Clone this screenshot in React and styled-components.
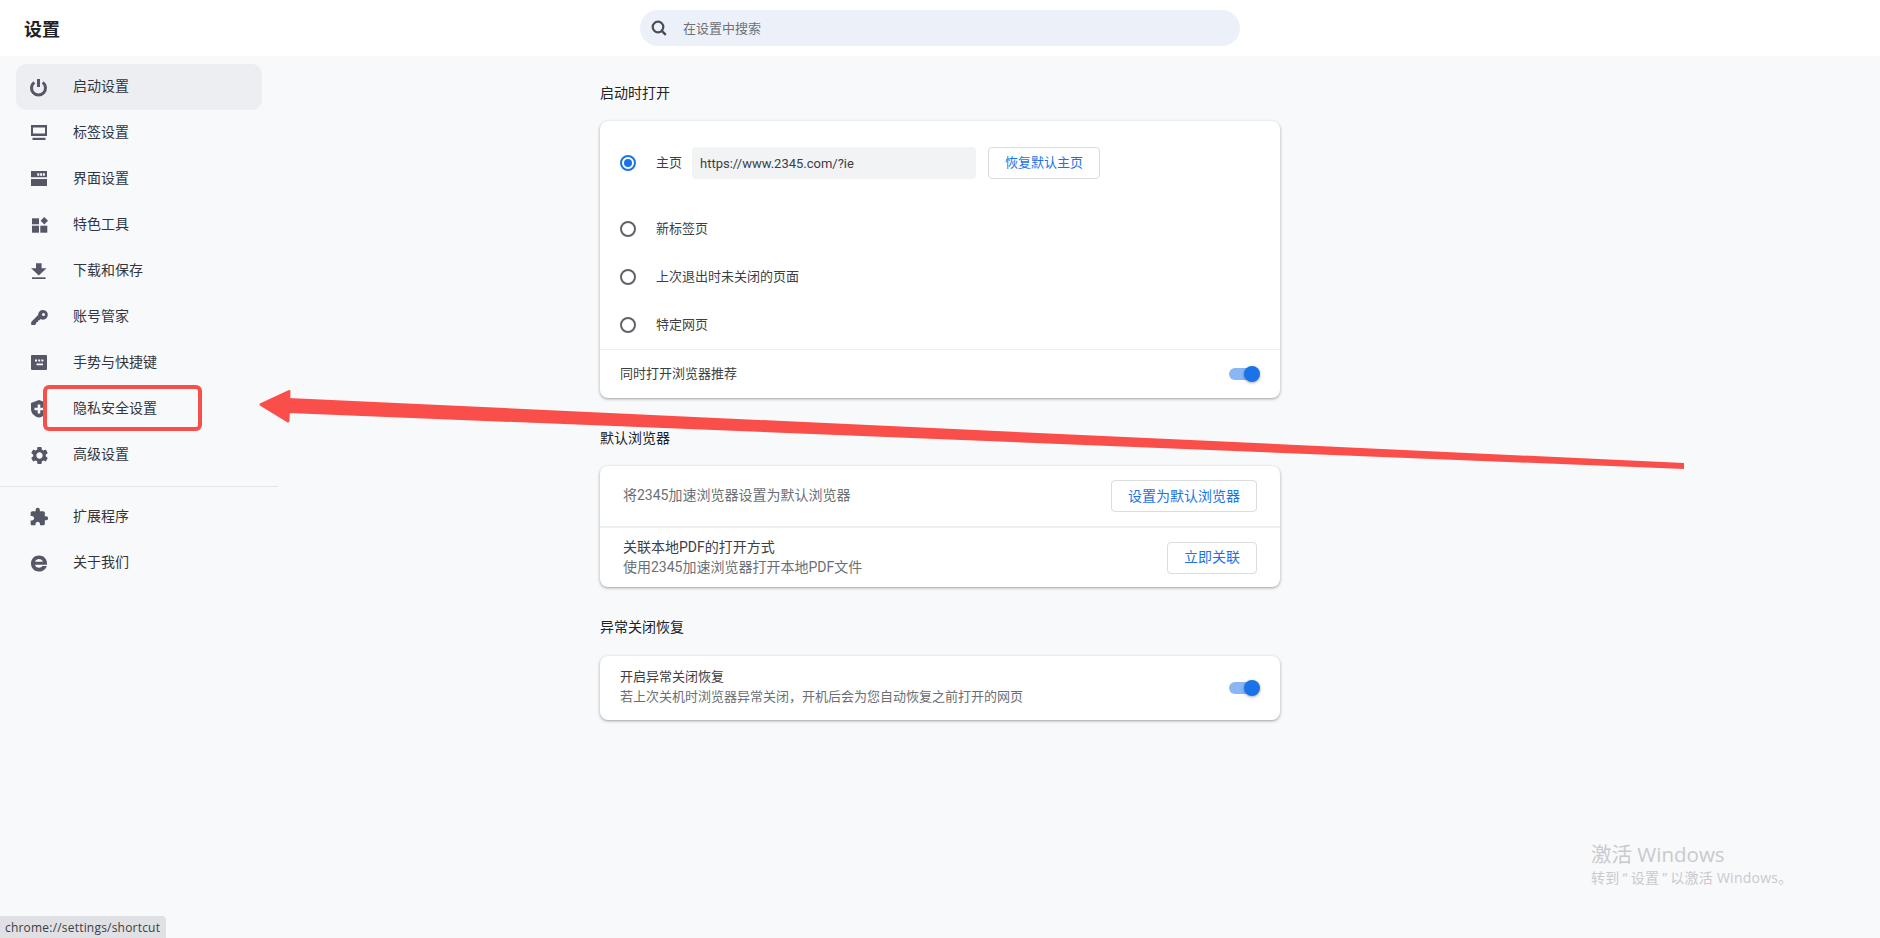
import React from 'react';
import styled, { createGlobalStyle } from 'styled-components';
import { MdSettings, MdExtension } from 'react-icons/md';

const Global = createGlobalStyle`
  html, body { margin: 0; padding: 0; height: 100%; }
  body { background: #f8f9fb; font-family: Roboto, "Noto Sans CJK SC", sans-serif; color: #202124; overflow: hidden; }
  * { box-sizing: border-box; }
`;

const Page = styled.div`
  position: relative;
  width: 1880px;
  height: 938px;
  overflow: hidden;
`;
const Header = styled.header`
  height: 56px;
  background: #fff;
  display: flex;
  align-items: center;
  padding-left: 24px;
`;
const Title = styled.h1`
  margin: 0;
  width: 616px;
  font-size: 18px;
  font-weight: 700;
  color: #202124;
`;
const Search = styled.div`
  width: 600px;
  height: 36px;
  border-radius: 18px;
  background: #ecf0f9;
  display: flex;
  align-items: center;
  padding-left: 8px;
  gap: 13px;
  color: #6f7276;
  font-size: 13px;
`;
const SearchText = styled.span`
  padding-bottom: 1px;
`;
const Body = styled.div`
  display: flex;
`;
const Sidebar = styled.nav`
  width: 278px;
  padding-top: 8px;
  flex: none;
`;
const NavGroup = styled.div`
  padding-left: 16px;
`;
const NavRow = styled.div`
  width: 246px;
  height: 46px;
  display: flex;
  align-items: center;
  padding-left: 11px;
  gap: 22px;
  border-radius: 10px;
  font-size: 14px;
  color: #33353d;
  background: ${p => (p.$active ? '#edeef2' : 'transparent')};
`;
const NavLabel = styled.span`
  padding-bottom: 4px;
`;
const IconBox = styled.span`
  width: 24px;
  height: 24px;
  display: flex;
  align-items: center;
  justify-content: center;
  color: #555766;
`;
const NavDivider = styled.div`
  height: 1px;
  background: #e4e5e9;
  margin: 8px 0 7px;
`;
const Main = styled.main`
  margin-left: 322px;
  width: 680px;
`;
const SectionTitle = styled.h2`
  margin: 0;
  font-size: 14px;
  font-weight: 400;
  color: #202124;
  height: ${p => p.$h}px;
  padding-top: ${p => p.$top}px;
  line-height: 20px;
`;
const Card = styled.section`
  background: #fff;
  border-radius: 8px;
  box-shadow: 0 1px 2px rgba(60, 64, 67, .3), 0 1px 3px 1px rgba(60, 64, 67, .15);
`;
const TextLine = styled.span`
  padding-bottom: 3px;
`;
const RadioRow = styled.div`
  height: ${p => p.$h}px;
  display: flex;
  align-items: center;
  padding-left: 20px;
  font-size: 13px;
  color: #3c4043;
`;
const Radio = styled.span`
  width: 16px;
  height: 16px;
  border-radius: 50%;
  border: 2px solid ${p => (p.$on ? '#1a73e8' : '#5f6368')};
  display: flex;
  align-items: center;
  justify-content: center;
  margin-right: 20px;
  flex: none;
  &::after {
    content: '';
    width: 8px;
    height: 8px;
    border-radius: 50%;
    background: ${p => (p.$on ? '#1a73e8' : 'transparent')};
  }
`;
const UrlField = styled.div`
  width: 284px;
  height: 32px;
  margin-left: 10px;
  padding-left: 8px;
  border-radius: 4px;
  background: #f1f3f4;
  display: flex;
  align-items: center;
  color: #3c4043;
  font-size: 13px;
`;
const OutlineBtn = styled.button`
  height: 32px;
  width: ${p => p.$w}px;
  margin-left: ${p => p.$ml || 0}px;
  background: #fff;
  border: 1px solid #dadce0;
  border-radius: 4px;
  color: #1a73e8;
  font: inherit;
  font-size: ${p => p.$fs || 14}px;
  padding: 0 0 3px;
  flex: none;
`;
const Divider = styled.div`
  height: ${p => p.$t || 1}px;
  background: #eceef0;
`;
const SwitchRow = styled.div`
  height: ${p => p.$h}px;
  display: flex;
  align-items: center;
  justify-content: space-between;
  padding: 0 20px;
  font-size: 13px;
  color: #3c4043;
`;
const Track = styled.span`
  position: relative;
  display: block;
  width: 29px;
  height: 12px;
  margin-right: 2px;
  border-radius: 6px;
  background: #8ab6f4;
  flex: none;
  &::after {
    content: '';
    position: absolute;
    right: -2px;
    top: -2px;
    width: 16px;
    height: 16px;
    border-radius: 50%;
    background: #1a73e8;
    box-shadow: 0 1px 3px rgba(0, 0, 0, .35);
  }
`;
const ActionRow = styled.div`
  height: ${p => p.$h}px;
  display: flex;
  align-items: center;
  justify-content: space-between;
  padding: 0 23px;
  font-size: 14px;
`;
const ActionText = styled.span`
  padding-bottom: 5px;
  color: #6b6f75;
`;
const Stack = styled.div`
  display: flex;
  flex-direction: column;
  line-height: 20px;
  padding-bottom: 2px;
  color: #3c4043;
`;
const Sub = styled.span`
  color: #6b6f75;
`;
const RedBox = styled.div`
  position: absolute;
  left: 43px;
  top: 385px;
  width: 159px;
  height: 46px;
  border: 4px solid #fa4e4b;
  border-radius: 6px;
`;
const ArrowSvg = styled.svg`
  position: absolute;
  left: 0;
  top: 0;
  pointer-events: none;
`;
const Watermark = styled.div`
  position: absolute;
  left: 1591px;
  top: 841px;
  color: #c9cacc;
  font-family: "Open Sans", "Noto Sans CJK SC", sans-serif;
`;
const WmTitle = styled.div`
  font-size: 20.5px;
  line-height: 27px;
`;
const WmSub = styled.div`
  font-size: 14px;
  line-height: 20px;
  letter-spacing: .25px;
`;
const WmQuote = styled.span`
  padding: 0 3px;
`;
const StatusBubble = styled.div`
  position: absolute;
  left: 0;
  bottom: 0;
  height: 22px;
  width: 166px;
  padding-left: 5px;
  display: flex;
  align-items: center;
  background: #dfe1e5;
  border-top-right-radius: 4px;
  font-size: 12px;
  letter-spacing: .2px;
  color: #3c4043;
  font-family: "Open Sans", sans-serif;
  white-space: nowrap;
`;

const Ico = ({ children }) => (
  <svg width="24" height="24" viewBox="0 0 24 24" fill="currentColor">{children}</svg>
);
const PowerIcon = () => (
  <Ico>
    <path d="M7.300 7.400A7 7 0 1 0 15.700 7.400" fill="none" stroke="currentColor" strokeWidth="3" />
    <rect x="10" y="4" width="3" height="8" />
  </Ico>
);
const MonitorIcon = () => (
  <Ico>
    <path fillRule="evenodd" d="M4 4h16v11H4zm2 2.500v6h12v-6z" />
    <rect x="5.500" y="16.800" width="13" height="2.200" />
  </Ico>
);
const WindowIcon = () => (
  <Ico>
    <path fillRule="evenodd" d="M4 4h16v6.300H4zm6.300 2.300v2.400h2V6.300zm2.800 0v2.400h2V6.300zm2.800 0v2.400h2V6.300z" />
    <rect x="4" y="12" width="16" height="7" />
  </Ico>
);
const WidgetIcon = () => (
  <Ico>
    <rect x="5" y="5.300" width="7" height="6" />
    <rect x="5" y="12.700" width="7" height="7" />
    <rect x="13.300" y="12.700" width="7" height="7" />
    <path d="M17.300 4l3.700 3.700-3.700 3.700-3.700-3.700z" />
  </Ico>
);
const DownloadIcon = () => (
  <Ico>
    <path d="M9 4.300h5.600v5h4.900l-7.700 7.200-7.700-7.200H9z" />
    <rect x="5" y="18.300" width="13.600" height="1.700" />
  </Ico>
);
const KeyIcon = () => (
  <Ico>
    <path fillRule="evenodd" d="M16 5a4.800 4.800 0 1 1-2.300 9l-1.300 1.300-1.300.1-.1 1.500-1.600.2-.2 1.500-1.200 1.400H4.200v-3l6.900-6.900A4.800 4.800 0 0 1 16 5zm.5 3a1.500 1.500 0 1 0 0 3 1.500 1.500 0 0 0 0-3z" />
  </Ico>
);
const KeyboardIcon = () => (
  <Ico>
    <path fillRule="evenodd" d="M5 4h14a1 1 0 0 1 1 1v13a1 1 0 0 1-1 1H5a1 1 0 0 1-1-1V5a1 1 0 0 1 1-1zm3 4.500v2h2v-2zm3.200 0v2h2v-2zm3.200 0v2h2v-2zM9.500 12.500v1.800h6.500v-1.800z" />
  </Ico>
);
const ShieldIcon = () => (
  <Ico>
    <path fillRule="evenodd" d="M12 3l8 3v6c0 4.500-3.400 7.600-8 8.600-4.600-1-8-4.100-8-8.600V6zm-1.300 4.500v3.200H7.500v2.600h3.200v3.200h2.600v-3.200h3.200v-2.600h-3.200V7.500z" />
  </Ico>
);
const IeIcon = () => (
  <Ico>
    <path fillRule="evenodd" d="M12 4.500c4.600 0 8 3.400 8 8v1.200H8c.4 1.900 2 3 4 3 1.500 0 2.700-.6 3.400-1.700h4.400c-1 3.500-4 5.500-7.800 5.500-4.600 0-8-3.500-8-8s3.400-8 8-8zM12 8c-1.900 0-3.400 1-3.900 2.800h7.800C15.400 9 13.900 8 12 8z" />
  </Ico>
);
const SearchIcon = () => (
  <svg width="22" height="22" viewBox="0 0 22 22" fill="none" stroke="#4a4d52">
    <circle cx="10" cy="10" r="5.300" strokeWidth="2.200" />
    <path d="M13.800 13.800l4 4" strokeWidth="2.400" />
  </svg>
);

const navTop = [
  ['启动设置', <PowerIcon />, true],
  ['标签设置', <MonitorIcon />],
  ['界面设置', <WindowIcon />],
  ['特色工具', <WidgetIcon />],
  ['下载和保存', <DownloadIcon />],
  ['账号管家', <KeyIcon />],
  ['手势与快捷键', <KeyboardIcon />],
  ['隐私安全设置', <ShieldIcon />],
  ['高级设置', <MdSettings size={21} />],
];
const navBottom = [
  ['扩展程序', <MdExtension size={20} />],
  ['关于我们', <IeIcon />],
];

const Nav = ({ items }) => (
  <NavGroup>
    {items.map(([label, icon, active]) => (
      <NavRow key={label} $active={active}>
        <IconBox>{icon}</IconBox>
        <NavLabel>{label}</NavLabel>
      </NavRow>
    ))}
  </NavGroup>
);

export default function App() {
  return (
    <Page>
      <Global />
      <Header>
        <Title>设置</Title>
        <Search>
          <SearchIcon />
          <SearchText>在设置中搜索</SearchText>
        </Search>
      </Header>
      <Body>
        <Sidebar>
          <Nav items={navTop} />
          <NavDivider />
          <Nav items={navBottom} />
        </Sidebar>
        <Main>
          <SectionTitle $h={65} $top={27}>启动时打开</SectionTitle>
          <Card>
            <RadioRow $h={84}>
              <Radio $on />
              <TextLine>主页</TextLine>
              <UrlField>https://www.2345.com/?ie</UrlField>
              <OutlineBtn $w={112} $ml={12} $fs={13}>恢复默认主页</OutlineBtn>
            </RadioRow>
            <RadioRow $h={48}><Radio /><TextLine>新标签页</TextLine></RadioRow>
            <RadioRow $h={48}><Radio /><TextLine>上次退出时未关闭的页面</TextLine></RadioRow>
            <RadioRow $h={48}><Radio /><TextLine>特定网页</TextLine></RadioRow>
            <Divider />
            <SwitchRow $h={48}><TextLine>同时打开浏览器推荐</TextLine><Track /></SwitchRow>
          </Card>
          <SectionTitle $h={68} $top={30}>默认浏览器</SectionTitle>
          <Card>
            <ActionRow $h={60}>
              <ActionText>将2345加速浏览器设置为默认浏览器</ActionText>
              <OutlineBtn $w={146}>设置为默认浏览器</OutlineBtn>
            </ActionRow>
            <Divider $t={2} />
            <ActionRow $h={59}>
              <Stack>
                关联本地PDF的打开方式
                <Sub>使用2345加速浏览器打开本地PDF文件</Sub>
              </Stack>
              <OutlineBtn $w={90}>立即关联</OutlineBtn>
            </ActionRow>
          </Card>
          <SectionTitle $h={69} $top={30}>异常关闭恢复</SectionTitle>
          <Card>
            <SwitchRow $h={64}>
              <Stack>
                开启异常关闭恢复
                <Sub>若上次关机时浏览器异常关闭，开机后会为您自动恢复之前打开的网页</Sub>
              </Stack>
              <Track />
            </SwitchRow>
          </Card>
        </Main>
      </Body>
      <RedBox />
      <ArrowSvg width="1880" height="938" viewBox="0 0 1880 938">
        <path d="M288 398 L1684 463 L1684 469 L288 413 Z" fill="#fa4e4b" />
        <path
          d="M261 404.500 L289 391.500 L288 421 Z"
          fill="#fa4e4b"
          stroke="#fa4e4b"
          strokeWidth="3"
          strokeLinejoin="round"
        />
      </ArrowSvg>
      <Watermark>
        <WmTitle>激活 Windows</WmTitle>
        <WmSub>转到<WmQuote>“</WmQuote>设置<WmQuote>”</WmQuote>以激活 Windows。</WmSub>
      </Watermark>
      <StatusBubble>chrome://settings/shortcut</StatusBubble>
    </Page>
  );
}
